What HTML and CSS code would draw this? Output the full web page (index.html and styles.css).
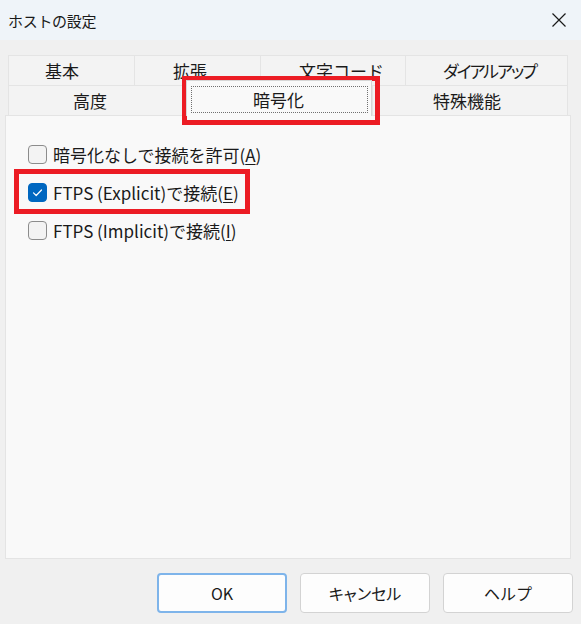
FILE: index.html
```html
<!DOCTYPE html>
<html lang="ja">
<head>
<meta charset="utf-8">
<link rel="stylesheet" href="styles.css">
</head>
<body>
<div class="window">
  <div class="titlebar">
    <span class="title">ホストの設定</span>
    <span class="close">
      <svg width="16" height="16" viewBox="0 0 16 16"><path d="M1.5 1.5 L14.5 14.5 M14.5 1.5 L1.5 14.5" stroke="#1a1a1a" stroke-width="1.2" fill="none"/></svg>
    </span>
  </div>
  <div class="body">
    <div class="tabs">
      <div class="tabrow row1">
        <div class="tab t-kihon">基本</div>
        <div class="tab t-kakucho">拡張</div>
        <div class="tab t-moji">文字コード</div>
        <div class="tab t-dial">ダイアルアップ</div>
      </div>
      <div class="tabrow row2">
        <div class="tab t-kodo">高度</div>
        <div class="tab selected t-ango"><span class="focus">暗号化</span></div>
        <div class="tab t-tokushu">特殊機能</div>
      </div>
    </div>
    <div class="panel">
      <div class="opt">
        <span class="cb"></span>
        <span class="label">暗号化なしで接続を許可(<u>A</u>)</span>
      </div>
      <div class="opt">
        <span class="cb checked">
          <svg width="19" height="19" viewBox="0 0 19 19"><path d="M5.5 9.8 L8.2 12.5 L13.5 7" stroke="#fff" stroke-width="1.2" fill="none" stroke-linecap="round" stroke-linejoin="round"/></svg>
        </span>
        <span class="label">FTPS (Explicit)で接続(<u>E</u>)</span>
      </div>
      <div class="opt">
        <span class="cb"></span>
        <span class="label">FTPS (Implicit)で接続(<u>I</u>)</span>
      </div>
    </div>
    <div class="buttons">
      <button class="btn default">OK</button>
      <button class="btn kana">キャンセル</button>
      <button class="btn">ヘルプ</button>
    </div>
  </div>
  <div class="mark mark-tab"></div>
  <div class="mark mark-opt"></div>
</div>
</body>
</html>
```

FILE: styles.css
```css
* { box-sizing: border-box; }
html, body { margin: 0; padding: 0; }
body {
  width: 581px;
  height: 624px;
  background: #f0f0f0;
  font-family: "Noto Sans CJK JP", "Noto Sans", sans-serif;
  color: #1a1a1a;
  overflow: hidden;
}
.window { position: relative; width: 581px; height: 624px; }
.titlebar {
  height: 40px;
  background: #eff4f9;
  display: flex;
  align-items: center;
  justify-content: space-between;
  padding: 0 14px 0 8px;
}
.title { font-size: 15px; letter-spacing: -0.3px; }
.close { display: flex; width: 16px; height: 16px; }

.body { padding: 15px 10px 0 5px; }
.tabs { margin: 0 3px; }
.tabrow { display: flex; height: 30px; }
.tab {
  height: 30px;
  font-size: 17px;
  line-height: 30px;
  background: #f3f3f3;
  border: 1px solid #e4e4e4;
  border-right: none;
  border-bottom: none;
  white-space: nowrap;
}
.tabrow .tab:last-child { border-right: 1px solid #e4e4e4; }

.t-kihon { width: 126px; padding-left: 36px; }
.t-kakucho { width: 126px; padding-left: 38px; }
.t-moji { width: 145px; padding-left: 38px; }
.t-dial { width: 163px; padding-left: 37px; font-feature-settings: "palt"; letter-spacing: -2px; }
.t-kodo { width: 178px; padding-left: 64px; }
.t-ango { width: 186px; }
.t-tokushu { width: 196px; padding-left: 60px; }

.tab.selected {
  position: relative;
  z-index: 2;
  background: #f9f9f9;
  border: 1px solid #d6d6d6;
  border-bottom: none;
  margin-top: -5px;
  height: 36px;
  padding: 5px 3px 3px 4px;
  line-height: 26px;
}
.focus {
  display: block;
  height: 27px;
  border: 1px dotted #707070;
  padding-left: 61px;
  line-height: 25px;
}

.panel {
  height: 444px;
  background: #f9f9f9;
  border: 1px solid #e4e4e4;
  padding: 19px 0 0 22px;
}
.opt {
  display: flex;
  align-items: center;
  height: 38px;
  font-size: 17px;
}
.cb {
  width: 19px;
  height: 19px;
  border: 1px solid #8c8c8c;
  border-radius: 4px;
  background: #f3f3f3;
  margin-right: 6px;
  display: flex;
  flex: none;
}
.cb.checked { background: #0067c0; border-color: #0067c0; }
.cb.checked svg { margin: -1px; }
.label u { text-underline-offset: 2px; }

.buttons {
  display: flex;
  justify-content: flex-end;
  gap: 13px;
  padding: 14px 0 0 0;
  margin-right: -2px;
}
.btn {
  width: 130px;
  height: 40px;
  background: #fdfdfd;
  border: 1px solid #d3d3d3;
  border-radius: 4px;
  font-family: "Noto Sans CJK JP", "Noto Sans", sans-serif;
  font-size: 16px;
  color: #1a1a1a;
  padding: 0;
}
.btn.kana { font-feature-settings: "palt"; }
.btn.default { border: 2px solid #7eb4ea; }

.mark {
  position: absolute;
  border: 5px solid #ec1c24;
  pointer-events: none;
}
.mark-tab { left: 182px; top: 76px; width: 198px; height: 49px; }
.mark-opt { left: 14px; top: 169px; width: 236px; height: 45px; }
```
